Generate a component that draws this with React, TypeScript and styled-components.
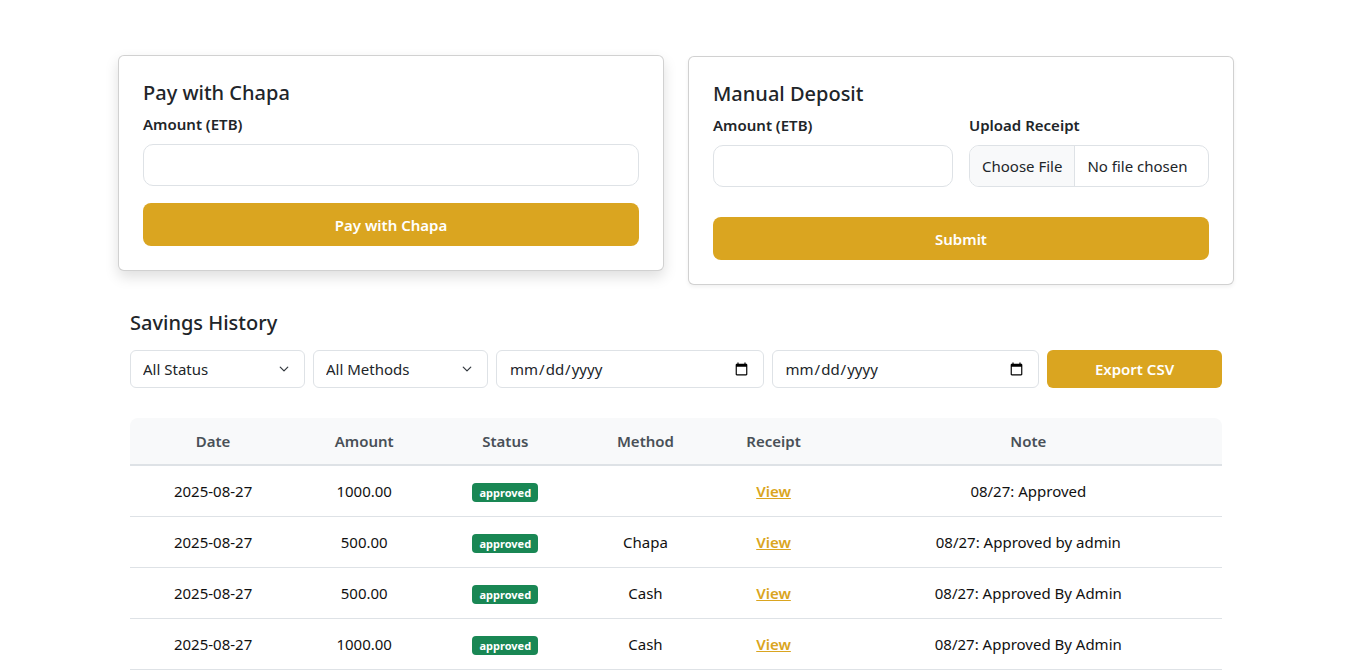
import React from "react";
import styled, { createGlobalStyle } from "styled-components";

const GlobalStyle = createGlobalStyle`
  * { box-sizing: border-box; }
  html, body { margin: 0; padding: 0; background: #ffffff; }
  body {
    font-family: "Noto Sans", "Open Sans", Arial, sans-serif;
    color: #212529;
    font-size: 16px;
    line-height: 1.5;
  }
`;

const GOLD = "#daa520";

const Page = styled.div`
  width: 1116px;
  margin: 0 0 0 118px;
  padding-top: 55px;
`;

const CardRow = styled.div`
  display: flex;
  gap: 24px;
  align-items: flex-start;
`;

const Card = styled.div<{ $raised?: boolean; $offset?: number }>`
  flex: 1;
  background: #fff;
  border: 1px solid rgba(0, 0, 0, 0.18);
  border-radius: 6px;
  padding: 24px;
  margin-top: ${(p) => p.$offset ?? 0}px;
  box-shadow: ${(p) =>
    p.$raised ? "0 6px 14px rgba(0,0,0,0.13)" : "0 2px 4px rgba(0,0,0,0.06)"};
`;

const CardTitle = styled.h5`
  margin: 0 0 8px;
  padding-top: 1px;
  font-size: 20px;
  line-height: 23px;
  font-weight: 500;
  color: #212529;
`;

const Label = styled.label`
  display: block;
  font-size: 15px;
  line-height: 24px;
  font-weight: 600;
  margin-bottom: 8px;
  color: #212529;
`;

const TextInput = styled.input`
  display: block;
  width: 100%;
  height: 42px;
  border: 1px solid #dee2e6;
  border-radius: 10px;
  padding: 8px 12px;
  font: inherit;
  color: #212529;
  outline: none;
`;

const FileInput = styled.input`
  display: block;
  width: 100%;
  height: 42px;
  border: 1px solid #dee2e6;
  border-radius: 10px;
  padding: 0 12px 0 0;
  font-family: inherit;
  font-size: 15px;
  color: #212529;
  line-height: 40px;
  overflow: hidden;
  &::file-selector-button {
    font-family: inherit;
    font-size: 15px;
    color: #212529;
    background: #f8f9fa;
    border: none;
    border-right: 1px solid #dee2e6;
    height: 40px;
    padding: 0 12px;
    margin: 0 12px 0 0;
    border-radius: 0;
  }
`;

const PrimaryButton = styled.button<{ $mt: number }>`
  display: block;
  width: 100%;
  height: 43px;
  margin-top: ${(p) => p.$mt}px;
  background: ${GOLD};
  color: #fff;
  border: none;
  border-radius: 8px;
  font-family: inherit;
  font-size: 15px;
  font-weight: 600;
`;

const TwoCols = styled.div`
  display: grid;
  grid-template-columns: 1fr 1fr;
  gap: 16px;
`;

const Section = styled.section`
  padding: 26px 12px 0;
`;

const SectionTitle = styled.h4`
  margin: 0 0 15px;
  font-size: 20px;
  line-height: 24px;
  font-weight: 500;
  color: #212529;
`;

const Filters = styled.div`
  display: grid;
  grid-template-columns: 175px 175px 1fr 1fr 175px;
  gap: 8px;
`;

const Select = styled.select`
  height: 38px;
  width: 100%;
  appearance: none;
  border: 1px solid #dee2e6;
  border-radius: 6px;
  padding: 0 36px 0 12px;
  font-family: inherit;
  font-size: 15px;
  color: #212529;
  background: #fff
    url("data:image/svg+xml,%3csvg xmlns='http://www.w3.org/2000/svg' viewBox='0 0 16 16'%3e%3cpath fill='none' stroke='%23343a40' stroke-linecap='round' stroke-linejoin='round' stroke-width='2' d='m2 5 6 6 6-6'/%3e%3c/svg%3e")
    no-repeat right 14px center / 12px 10px;
`;

const DateInput = styled.input`
  height: 38px;
  width: 100%;
  border: 1px solid #dee2e6;
  border-radius: 6px;
  padding: 0 12px;
  font-family: inherit;
  font-size: 15px;
  color: #212529;
  background: #fff;
`;

const ExportButton = styled.button`
  height: 38px;
  background: ${GOLD};
  color: #fff;
  border: none;
  border-radius: 6px;
  font-family: inherit;
  font-size: 15px;
  font-weight: 600;
`;

const Table = styled.table`
  margin-top: 30px;
  width: 100%;
  border-collapse: separate;
  border-spacing: 0;
  table-layout: fixed;
  font-size: 15px;
`;

const HeadCell = styled.th<{ $w: number; $first?: boolean; $last?: boolean }>`
  width: ${(p) => p.$w}px;
  height: 48px;
  padding: 1px 8px 0;
  background: #f8f9fa;
  color: #495057;
  font-weight: 600;
  text-align: center;
  border-bottom: 2px solid #dee2e6;
  border-top-left-radius: ${(p) => (p.$first ? "8px" : "0")};
  border-top-right-radius: ${(p) => (p.$last ? "8px" : "0")};
`;

const Cell = styled.td`
  height: 51px;
  text-align: center;
  border-bottom: 1px solid #dee2e6;
  color: #111;
  padding: 1px 8px 0;
`;

const Badge = styled.span`
  display: inline-block;
  background: #198754;
  color: #fff;
  font-size: 11px;
  font-weight: 700;
  line-height: 1;
  padding: 4px 7px 4px;
  border-radius: 4px;
`;

const ViewLink = styled.a`
  color: ${GOLD};
  font-weight: 600;
  text-decoration: underline;
  cursor: pointer;
`;

const columns = [
  { key: "Date", w: 166 },
  { key: "Amount", w: 136 },
  { key: "Status", w: 146 },
  { key: "Method", w: 134 },
  { key: "Receipt", w: 122 },
  { key: "Note", w: 387 },
];

const rows = [
  { date: "2025-08-27", amount: "1000.00", method: "", note: "08/27: Approved" },
  { date: "2025-08-27", amount: "500.00", method: "Chapa", note: "08/27: Approved by admin" },
  { date: "2025-08-27", amount: "500.00", method: "Cash", note: "08/27: Approved By Admin" },
  { date: "2025-08-27", amount: "1000.00", method: "Cash", note: "08/27: Approved By Admin" },
];

export default function App() {
  return (
    <>
      <GlobalStyle />
      <Page>
        <CardRow>
          <Card $raised>
            <CardTitle>Pay with Chapa</CardTitle>
            <Label>Amount (ETB)</Label>
            <TextInput type="text" />
            <PrimaryButton $mt={17}>Pay with Chapa</PrimaryButton>
          </Card>
          <Card $offset={1}>
            <CardTitle>Manual Deposit</CardTitle>
            <TwoCols>
              <div>
                <Label>Amount (ETB)</Label>
                <TextInput type="text" />
              </div>
              <div>
                <Label>Upload Receipt</Label>
                <FileInput type="file" />
              </div>
            </TwoCols>
            <PrimaryButton $mt={30}>Submit</PrimaryButton>
          </Card>
        </CardRow>
        <Section>
          <SectionTitle>Savings History</SectionTitle>
          <Filters>
            <Select defaultValue="all">
              <option value="all">All Status</option>
            </Select>
            <Select defaultValue="all">
              <option value="all">All Methods</option>
            </Select>
            <DateInput type="date" />
            <DateInput type="date" />
            <ExportButton>Export CSV</ExportButton>
          </Filters>
          <Table>
            <thead>
              <tr>
                {columns.map((c, i) => (
                  <HeadCell
                    key={c.key}
                    $w={c.w}
                    $first={i === 0}
                    $last={i === columns.length - 1}
                  >
                    {c.key}
                  </HeadCell>
                ))}
              </tr>
            </thead>
            <tbody>
              {rows.map((r, i) => (
                <tr key={i}>
                  <Cell>{r.date}</Cell>
                  <Cell>{r.amount}</Cell>
                  <Cell>
                    <Badge>approved</Badge>
                  </Cell>
                  <Cell>{r.method}</Cell>
                  <Cell>
                    <ViewLink>View</ViewLink>
                  </Cell>
                  <Cell>{r.note}</Cell>
                </tr>
              ))}
            </tbody>
          </Table>
        </Section>
      </Page>
    </>
  );
}
